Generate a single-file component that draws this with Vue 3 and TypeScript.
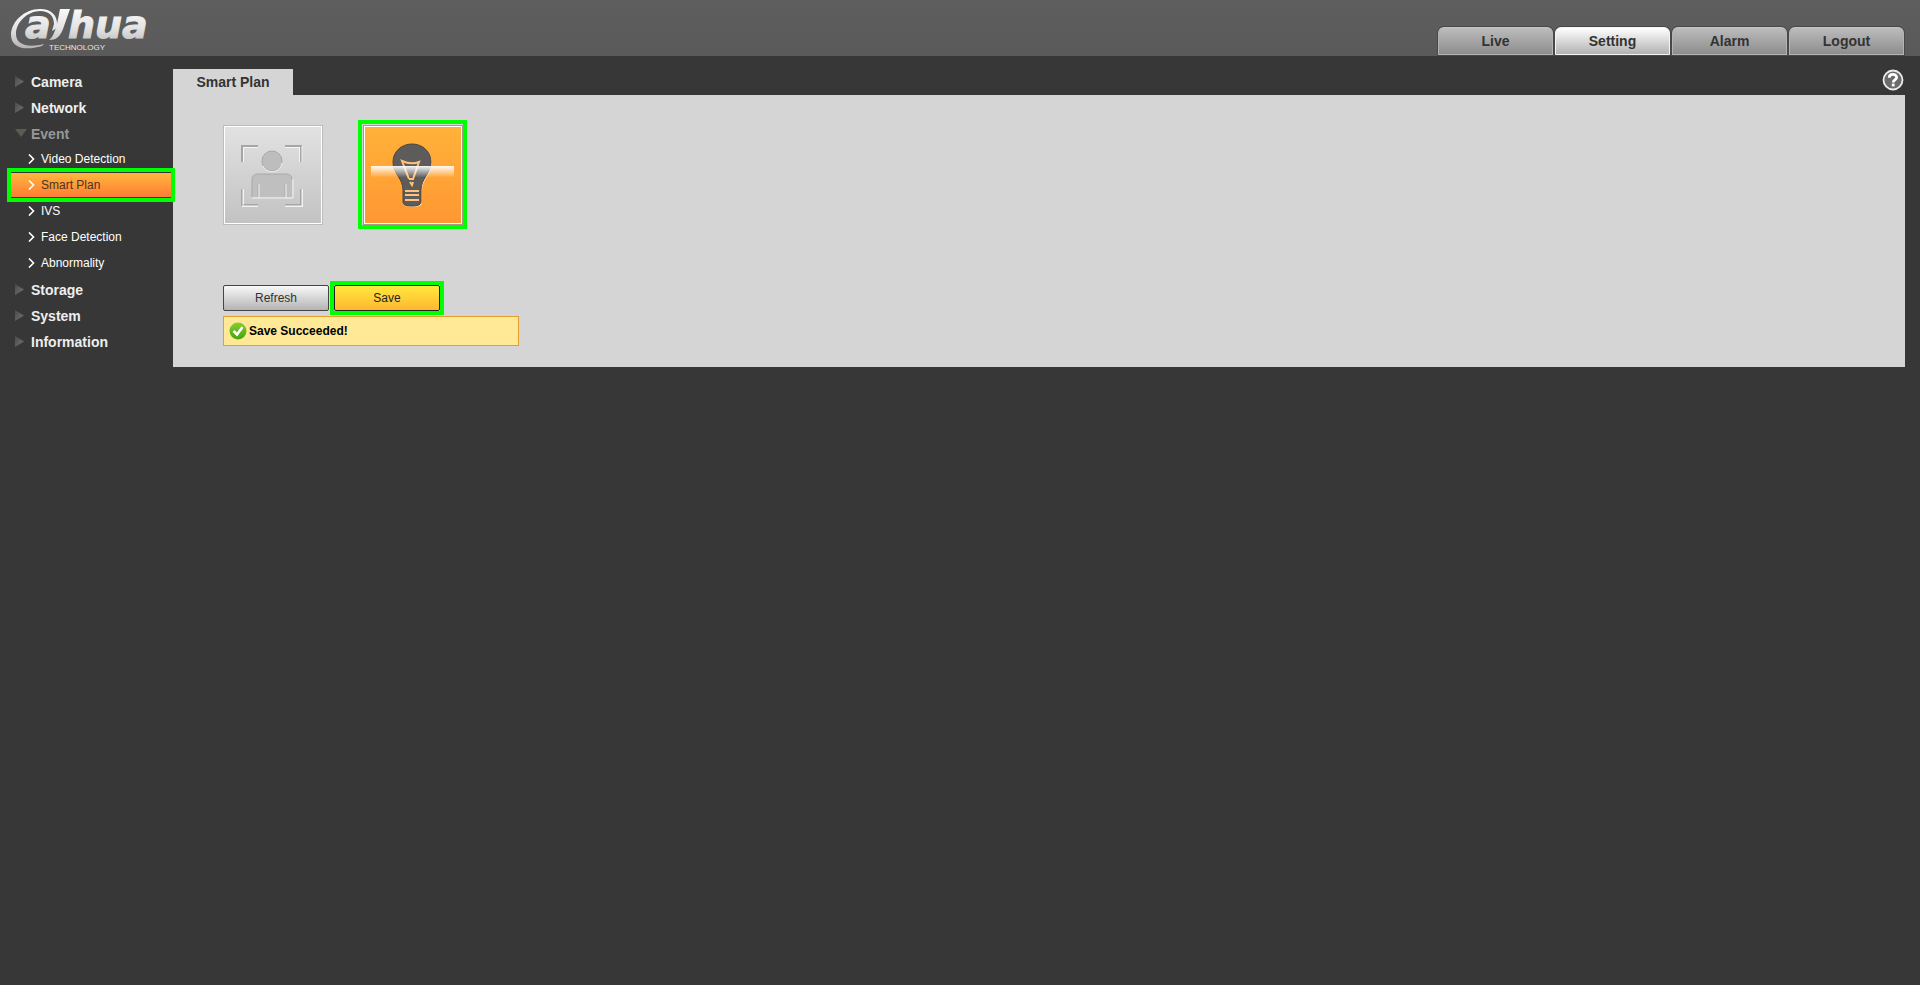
<script setup lang="ts">
import { ref } from 'vue'

const topTabs = ['Live', 'Setting', 'Alarm', 'Logout']
const activeTop = ref('Setting')

interface Group {
  name: string
  items: string[]
}

const groups: Group[] = [
  { name: 'Camera', items: [] },
  { name: 'Network', items: [] },
  {
    name: 'Event',
    items: ['Video Detection', 'Smart Plan', 'IVS', 'Face Detection', 'Abnormality'],
  },
  { name: 'Storage', items: [] },
  { name: 'System', items: [] },
  { name: 'Information', items: [] },
]
const openGroup = ref('Event')
const activeItem = ref('Smart Plan')

const plan = ref<'face' | 'ivs'>('ivs')
const saved = ref(true)
</script>

<template>
  <div class="page">
    <header class="header">
      <svg class="logo" width="154" height="54" viewBox="0 0 154 54" role="img" aria-label="alhua TECHNOLOGY">
        <defs>
          <linearGradient id="silver" gradientUnits="userSpaceOnUse" x1="0" y1="8" x2="0" y2="48">
            <stop offset="0" stop-color="#fafafa" />
            <stop offset="0.5" stop-color="#e4e4e4" />
            <stop offset="1" stop-color="#b4b4b4" />
          </linearGradient>
        </defs>
        <path
          d="M57 26C58 15 51 9 40 9C24 9 11 22 11 35C11 46 22 52 42 46L44 44C28 48 16 45 16 34C16 22 28 11 40 11C49 11 54 16 54 24L52 31C55 30 56 28 57 26Z"
          fill="url(#silver)"
        />
        <path d="M60 9H70L63 29C60 37 56 40 49 40C54 36 55 30 57 24Z" fill="url(#silver)" />
        <text class="wordmark" x="25" y="38">a</text>
        <text class="wordmark" x="68" y="38">hua</text>
        <text class="tagline" x="49" y="50">TECHNOLOGY</text>
      </svg>
      <nav class="top-nav">
        <a
          v-for="tab in topTabs"
          :key="tab"
          href="#"
          class="top-tab"
          :class="{ active: tab === activeTop }"
          @click.prevent="activeTop = tab"
        >{{ tab }}</a>
      </nav>
    </header>

    <div class="body">
      <nav class="sidebar">
        <template v-for="group in groups" :key="group.name">
          <button
            type="button"
            class="group"
            :class="{ open: group.name === openGroup }"
            @click="openGroup = group.name"
          >
            <svg class="arrow" width="12" height="12" viewBox="0 0 12 12" aria-hidden="true">
              <defs>
                <linearGradient id="fade" x1="0" y1="0" x2="1" y2="1">
                  <stop offset="0" stop-color="#4a4a4a" />
                  <stop offset="1" stop-color="#747474" />
                </linearGradient>
              </defs>
              <path v-if="group.name === openGroup" d="M0 1H12L6 9Z" fill="#5d5a52" />
              <path v-else d="M0 0L9 5.500L0 11Z" fill="url(#fade)" />
            </svg>
            {{ group.name }}
          </button>
          <template v-if="group.name === openGroup">
            <a
              v-for="item in group.items"
              :key="item"
              href="#"
              class="item"
              :class="{ active: item === activeItem }"
              @click.prevent="activeItem = item"
            >
              <svg width="7" height="10" viewBox="0 0 7 10" aria-hidden="true">
                <path d="M1 0.500L5.500 5L1 9.500" fill="none" stroke="#fff" stroke-width="1.600" />
              </svg>
              {{ item }}
            </a>
          </template>
        </template>
      </nav>

      <main class="main">
        <div class="title-row">
          <h1 class="page-tab">Smart Plan</h1>
          <button type="button" class="help" aria-label="Help">
            <svg width="22" height="22" viewBox="0 0 22 22" aria-hidden="true">
              <circle cx="11" cy="11" r="9.500" fill="#6b6b6b" stroke="#ececec" stroke-width="1.800" />
              <path
                d="M7.200 8.800C7.200 4.400 14.600 4.400 14.600 8.400C14.600 10.800 11.200 10.800 11.200 13.400"
                fill="none"
                stroke="#fff"
                stroke-width="2.800"
              />
              <rect x="9.800" y="14.600" width="2.800" height="2.800" fill="#fff" />
            </svg>
          </button>
        </div>

        <section class="panel">
          <div class="plans">
            <button
              type="button"
              class="plan"
              aria-label="Face Detection"
              :class="{ selected: plan === 'face' }"
              @click="plan = 'face'"
            >
              <svg width="97" height="97" viewBox="0 1 97 97" aria-hidden="true">
                <g fill="none" stroke-width="2">
                  <g stroke="#f4f4f4">
                    <path d="M19 36V21H34M61 21H76V36M19 63V80H34M61 80H78V63" />
                  </g>
                  <g stroke="#a6a6a6">
                    <path d="M18 36V20H34M61 20H77V36M18 63V79H34M61 79H77V63" />
                  </g>
                  <path d="M19 63V80H34M61 80H78V63M78 20V36" stroke="#f0f0f0" stroke-width="1" />
                </g>
                <circle cx="48" cy="35" r="10" fill="#bdbdbd" stroke="#a8a8a8" />
                <path d="M39 40A10 10 0 0 0 58 37" fill="none" stroke="#f2f2f2" />
                <path
                  d="M28 71V54Q28 48 34 48H62Q68 48 68 54V71Z"
                  fill="#bfbfbf"
                />
                <path d="M28 71V54Q28 48 34 48H62Q68 48 68 54M34 58V71M61 58V71" fill="none" stroke="#a8a8a8" />
                <path d="M28 72H35V58M35 72H62M62 58V72H69V53" fill="none" stroke="#f2f2f2" />
              </svg>
            </button>
            <button
              type="button"
              class="plan"
              aria-label="IVS"
              :class="{ selected: plan === 'ivs' }"
              @click="plan = 'ivs'"
            >
              <svg width="97" height="97" viewBox="-1 0 97 97" aria-hidden="true">
                <defs>
                  <linearGradient id="beam" x1="0" y1="0" x2="0" y2="1">
                    <stop offset="0" stop-color="#fff" stop-opacity="0.950" />
                    <stop offset="1" stop-color="#fff" stop-opacity="0.050" />
                  </linearGradient>
                </defs>
                <path
                  d="M47 17C58 17 66 25 66 35C66 47 56 51 56 63V75Q56 79 47 79Q38 79 38 75V63C38 51 28 47 28 35C28 25 36 17 47 17Z"
                  fill="#ffd9a5"
                  transform="translate(1 1)"
                />
                <path
                  d="M47 17C58 17 66 25 66 35C66 47 56 51 56 63V75Q56 79 47 79Q38 79 38 75V63C38 51 28 47 28 35C28 25 36 17 47 17Z"
                  fill="#5d5c5a"
                  stroke="#4c4641"
                />
                <path
                  d="M44 52L37 34Q46 38 54 35L48 52M44 52H49M45 55L47 58L48 55"
                  fill="none"
                  stroke="#ffc27c"
                  stroke-width="2"
                />
                <path d="M40 64H54M40 68H54M40 73H54" stroke="#ffc27c" stroke-width="2" />
                <rect x="6" y="39" width="83" height="11" fill="url(#beam)" />
              </svg>
            </button>
          </div>

          <div class="actions">
            <button type="button" class="btn" @click="saved = false">Refresh</button>
            <button type="button" class="btn primary" @click="saved = true">Save</button>
          </div>

          <p v-if="saved" class="notice" role="status">
            <svg width="18" height="18" viewBox="0 0 18 18" aria-hidden="true">
              <defs>
                <linearGradient id="ok" x1="0" y1="0" x2="0" y2="1">
                  <stop offset="0" stop-color="#84cf2e" />
                  <stop offset="1" stop-color="#45a40d" />
                </linearGradient>
              </defs>
              <circle cx="9" cy="9" r="8.500" fill="url(#ok)" />
              <path d="M4.500 9L8 12.500L13.500 5" fill="none" stroke="#fff" stroke-width="2.600" />
            </svg>
            Save Succeeded!
          </p>
        </section>
      </main>
    </div>
  </div>
</template>

<style>
html,
body {
  margin: 0;
  min-height: 100%;
  background: #373737;
}
</style>

<style scoped>
.page {
  font-family: 'Liberation Sans', Arial, sans-serif;
  font-size: 12px;
  color: #333;
}

.page * {
  box-sizing: border-box;
}

button {
  font: inherit;
  cursor: pointer;
}

.header {
  display: flex;
  justify-content: space-between;
  align-items: flex-end;
  height: 56px;
  padding-right: 16px;
  background: linear-gradient(#5e5e5e, #5a5a5a);
}

.logo {
  display: block;
  align-self: flex-start;
}

.wordmark {
  font: italic bold 38px 'DejaVu Sans', sans-serif;
  fill: url(#silver);
  stroke: url(#silver);
  stroke-width: 1px;
}

.tagline {
  font: 8px 'Liberation Sans', Arial, sans-serif;
  fill: #e6e6e6;
}

.top-nav {
  display: flex;
  gap: 2px;
  padding-bottom: 1px;
}

.top-tab {
  width: 115px;
  height: 28px;
  border: 1px solid #b4b4b4;
  border-top-color: #c4c4c4;
  border-radius: 6px 6px 0 0;
  background: linear-gradient(#bcbcbc, #8d8d8d);
  box-shadow: 0 0 0 1px #484848;
  color: #333;
  font-size: 14px;
  font-weight: bold;
  line-height: 27px;
  text-align: center;
  text-decoration: none;
}

.top-tab.active {
  border-color: #f4f4f4;
  background: linear-gradient(#fff, #b2b2b2);
}

.body {
  display: flex;
  padding: 13px 15px 0 0;
}

.sidebar {
  display: flex;
  flex: 0 0 173px;
  flex-direction: column;
}

.group {
  display: flex;
  align-items: center;
  gap: 4px;
  height: 26px;
  padding: 0 0 0 15px;
  border: 0;
  background: none;
  color: #eee;
  font-size: 14px;
  font-weight: bold;
  text-align: left;
}

.group.open {
  color: #979797;
}

.item {
  position: relative;
  display: flex;
  align-items: center;
  gap: 6px;
  height: 24px;
  margin: 0 2px 2px 11px;
  padding-left: 17px;
  color: #fff;
  text-decoration: none;
}

.item.active {
  background: linear-gradient(#ffb83d, #ff7b35);
  color: #4a3320;
}

.item.active::after,
.plan.selected::after,
.btn.primary::after {
  content: '';
  position: absolute;
  border: 4px solid #00ff00;
  pointer-events: none;
}

.item.active::after {
  inset: -5px -4px;
}

.main {
  flex: 1;
  min-width: 0;
}

.title-row {
  display: flex;
  justify-content: space-between;
  align-items: flex-end;
}

.page-tab {
  width: 120px;
  height: 26px;
  margin: 0;
  background: #d5d5d5;
  color: #333;
  font-size: 14px;
  line-height: 26px;
  text-align: center;
}

.help {
  height: 22px;
  margin: 0 1px 4px 0;
  padding: 0;
  border: 0;
  background: none;
}

.help svg {
  display: block;
}

.panel {
  padding: 30px 50px 21px;
  background: #d5d5d5;
}

.plans {
  display: flex;
  gap: 40px;
}

.plan {
  position: relative;
  width: 100px;
  height: 100px;
  padding: 0;
  border: 1px solid #bcbcbc;
  background: linear-gradient(#e2e2e2, #c2c2c2);
  box-shadow: inset 0 0 0 1px #fff;
}

.plan svg {
  display: block;
}

.plan.selected {
  border-color: #a39a8c;
  background: linear-gradient(#ffb23a, #ff9732);
}

.plan.selected::after {
  inset: -6px -5px -5px -6px;
}

.actions {
  display: flex;
  gap: 5px;
  margin-top: 60px;
}

.btn {
  position: relative;
  width: 106px;
  height: 26px;
  padding: 0;
  border: 1px solid #444;
  border-radius: 2px;
  background: linear-gradient(#f8f8f8, #b4b4b4);
  color: #333;
}

.btn.primary {
  border-color: #222;
  background: linear-gradient(#ffe93e, #ffb72f);
  color: #222;
}

.btn.primary::after {
  inset: -5px;
}

.notice {
  display: flex;
  align-items: center;
  gap: 2px;
  width: 296px;
  height: 30px;
  margin: 5px 0 0;
  padding-left: 5px;
  border: 1px solid #e3a02f;
  background: #ffe896;
  color: #000;
  font-weight: bold;
}
</style>
